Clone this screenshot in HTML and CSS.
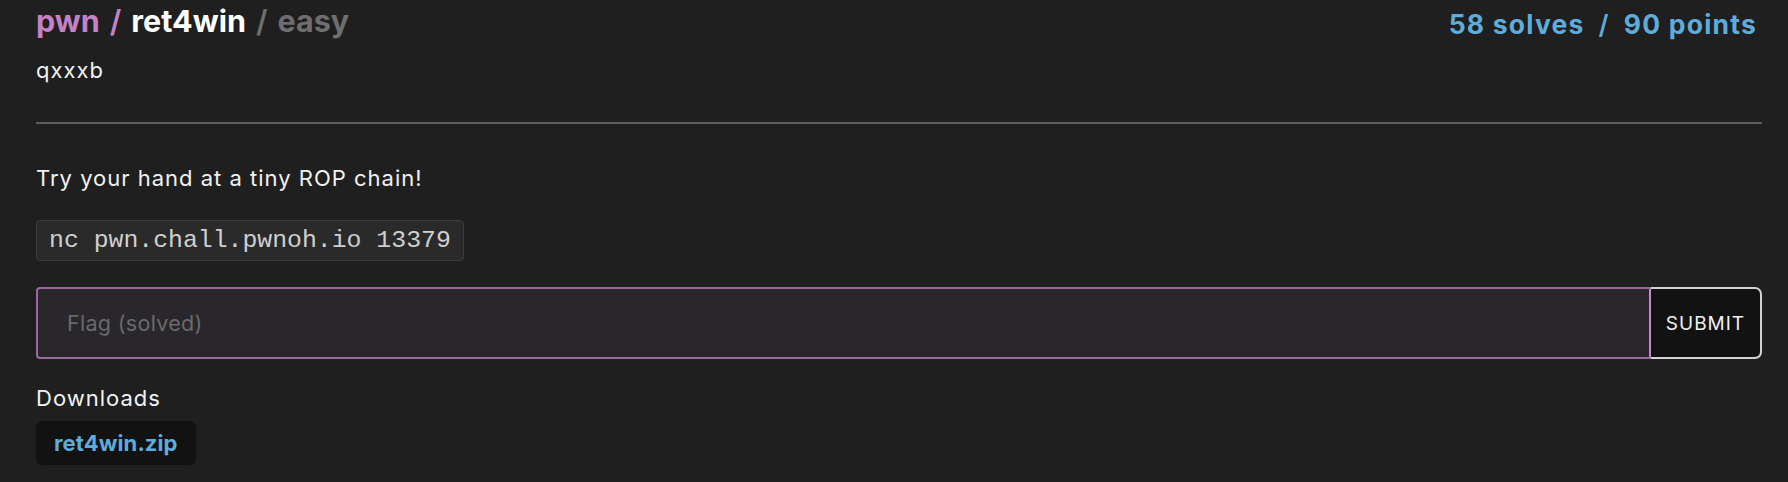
FILE: index.html
```html
<!DOCTYPE html>
<html lang="en">
<head>
<meta charset="utf-8">
<title>ret4win</title>
<link rel="stylesheet" href="styles.css">
</head>
<body>
<main class="challenge">
  <header class="head">
    <div class="head-left">
      <h1 class="title"><span class="cat">pwn</span><span class="sep cat-sep">/</span><span class="name">ret4win</span><span class="sep diff-sep">/</span><span class="diff">easy</span></h1>
      <div class="author">qxxxb</div>
    </div>
    <div class="stats"><span>58 solves</span><span class="stats-sep">/</span><span>90 points</span></div>
  </header>
  <hr class="rule">
  <p class="desc">Try your hand at a tiny ROP chain!</p>
  <div class="code-wrap"><code class="code">nc pwn.chall.pwnoh.io 13379</code></div>
  <form class="flag-form">
    <input class="flag-input" type="text" placeholder="Flag (solved)">
    <button class="submit" type="button">SUBMIT</button>
  </form>
  <div class="downloads">
    <div class="dl-label">Downloads</div>
    <a class="dl-chip" href="#">ret4win.zip</a>
  </div>
</main>
</body>
</html>
```

FILE: styles.css
```css
html, body {
  margin: 0;
  padding: 0;
  background: #1f1f1f;
}
body {
  font-family: Inter, "Noto Sans", sans-serif;
  color: #f2f2f2;
}
.challenge {
  padding: 0 26px 0 36px;
  display: flex;
  flex-direction: column;
}
.head {
  display: flex;
  justify-content: space-between;
  align-items: flex-start;
}
.title {
  margin: 2px 0 0;
  font-size: 30.5px;
  line-height: 38px;
  font-weight: 700;
  color: #fff;
}
.cat { color: #c581c6; }
.cat-sep { color: #c581c6; }
.sep { margin: 0 10px; font-weight: 600; }
.diff-sep, .diff { color: #6e6e6e; }
.author {
  margin-top: 15px;
  font-size: 22px;
  letter-spacing: 1px;
  line-height: 30px;
  color: #f2f2f2;
}
.stats {
  margin: 10px 5px 0 0;
  font-size: 26.5px;
  letter-spacing: 1.2px;
  line-height: 29px;
  font-weight: 700;
  color: #5eacdc;
}
.stats-sep { margin: 0 14px; font-weight: 600; }
.rule {
  margin: 37px 0 0;
  border: 0;
  border-top: 2px solid #5e5e5e;
}
.desc {
  margin: 40px 0 0;
  font-size: 22px;
  letter-spacing: 1px;
  line-height: 28px;
}
.code-wrap {
  margin-top: 28px;
  display: flex;
}
.code {
  font-family: "Liberation Mono", "Courier New", monospace;
  font-size: 24.8px;
  line-height: 39px;
  padding: 0 12px;
  color: #cfcfcf;
  background: #2a2a2a;
  border: 1px solid #3b3b3b;
  border-radius: 4px;
}
.flag-form {
  margin-top: 26px;
  display: flex;
  height: 72px;
}
.flag-input {
  flex: 1;
  min-width: 0;
  box-sizing: border-box;
  height: 72px;
  margin: 0;
  padding: 0 0 0 29px;
  font-family: Inter, "Noto Sans", sans-serif;
  font-size: 21.5px;
  letter-spacing: 0.3px;
  color: #eee;
  background: #29272b;
  border: 2px solid #9a6a9e;
  border-right-color: #c38cc9;
  border-radius: 4px 0 0 4px;
  outline: none;
}
.flag-input::placeholder { color: #6a6a6a; }
.submit {
  box-sizing: border-box;
  height: 72px;
  width: 111px;
  margin: 0;
  padding: 0;
  font-family: Inter, "Noto Sans", sans-serif;
  font-size: 19px;
  letter-spacing: 1px;
  color: #f0f0f0;
  background: #121212;
  border: 2px solid #d2d2d2;
  border-left: 0;
  border-radius: 0 7px 7px 0;
}
.downloads {
  margin-top: 24px;
  display: flex;
  flex-direction: column;
  align-items: flex-start;
}
.dl-label {
  font-size: 22px;
  letter-spacing: 1px;
  line-height: 30px;
}
.dl-chip {
  margin-top: 8px;
  padding: 0 18px;
  height: 44px;
  display: flex;
  align-items: center;
  font-size: 22px;
  letter-spacing: 0.1px;
  font-weight: 700;
  color: #5eacdc;
  text-decoration: none;
  background: #121212;
  border-radius: 6px;
}
```
